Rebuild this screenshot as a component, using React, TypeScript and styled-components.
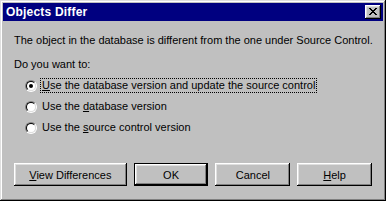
import React from "react";
import styled, { createGlobalStyle } from "styled-components";

const Global = createGlobalStyle`
  html, body { margin: 0; padding: 0; background: #c0c0c0; }
  body { font-family: "Liberation Sans", Arial, sans-serif; font-size: 11px; color: #000; }
`;

const Window = styled.div`
  width: 386px;
  height: 201px;
  box-sizing: border-box;
  padding: 3px;
  background: #c0c0c0;
  box-shadow: inset -1px -1px #000, inset 1px 1px #dfdfdf, inset -2px -2px #808080, inset 2px 2px #fff;
  display: flex;
  flex-direction: column;
`;

const TitleBar = styled.div`
  height: 18px;
  background: #000080;
  display: flex;
  align-items: center;
  justify-content: space-between;
  padding: 0 2px 0 3px;
`;

const Title = styled.span`
  color: #fff;
  font-weight: bold;
  font-size: 12px;
  letter-spacing: 0.2px;
`;

const CloseButton = styled.div`
  width: 16px;
  height: 14px;
  box-sizing: border-box;
  background: #c0c0c0;
  box-shadow: inset -1px -1px #000, inset 1px 1px #fff, inset -2px -2px #808080, inset 2px 2px #dfdfdf;
  display: flex;
  align-items: center;
  justify-content: center;
  padding-bottom: 1px;
`;

const Content = styled.div`
  flex: 1;
  display: flex;
  flex-direction: column;
  padding: 13px 11px 12px 11px;
`;

const Line = styled.div<{ $mt?: number }>`
  line-height: 13px;
  white-space: nowrap;
  margin-top: ${(p) => p.$mt ?? 0}px;
`;

const RadioGroup = styled.div`
  margin-top: 4px;
  padding-left: 11px;
  display: flex;
  flex-direction: column;
`;

const RadioRow = styled.div`
  height: 21px;
  display: flex;
  align-items: center;
`;

const RadioOuter = styled.div`
  width: 12px;
  height: 12px;
  box-sizing: border-box;
  border-radius: 50%;
  border: 1px solid;
  border-color: #808080 #fff #fff #808080;
  display: flex;
  align-items: center;
  justify-content: center;
  margin-right: 5px;
`;

const RadioInner = styled.div`
  width: 10px;
  height: 10px;
  box-sizing: border-box;
  border-radius: 50%;
  border: 1px solid;
  border-color: #000 #dfdfdf #dfdfdf #000;
  background: #fff;
  display: flex;
  align-items: center;
  justify-content: center;
`;

const Dot = styled.div`
  width: 4px;
  height: 4px;
  border-radius: 50%;
  background: #000;
`;

const Label = styled.span<{ $focus?: boolean }>`
  line-height: 13px;
  padding: 0 1px;
  border: 1px dotted ${(p) => (p.$focus ? "#000" : "transparent")};
  margin-left: -2px;
  white-space: nowrap;
`;

const U = styled.span`
  text-decoration: underline;
`;

const ButtonRow = styled.div`
  margin-top: auto;
  display: flex;
  gap: 7px;
`;

const Button = styled.div<{ $w: number; $default?: boolean }>`
  width: ${(p) => p.$w}px;
  height: 23px;
  box-sizing: border-box;
  background: #c0c0c0;
  display: flex;
  align-items: center;
  justify-content: center;
  border: 1px solid ${(p) => (p.$default ? "#000" : "transparent")};
  box-shadow: inset -1px -1px #000, inset 1px 1px #fff, inset -2px -2px #808080, inset 2px 2px #dfdfdf;
  ${(p) => (p.$default ? "" : "border: none;")}
  white-space: nowrap;
`;

const Radio = ({ checked }: { checked?: boolean }) => (
  <RadioOuter>
    <RadioInner>{checked && <Dot />}</RadioInner>
  </RadioOuter>
);

export default function App() {
  return (
    <>
      <Global />
      <Window>
        <TitleBar>
          <Title>Objects Differ</Title>
          <CloseButton>
            <svg width="8" height="7" viewBox="0 0 8 7" shapeRendering="crispEdges">
              <path
                d="M0 0h2v1h-2zM6 0h2v1h-2zM1 1h2v1h-2zM5 1h2v1h-2zM2 2h4v1h-4zM3 3h2v1h-2zM2 4h4v1h-4zM1 5h2v1h-2zM5 5h2v1h-2zM0 6h2v1h-2zM6 6h2v1h-2z"
                fill="#000"
              />
            </svg>
          </CloseButton>
        </TitleBar>
        <Content>
          <Line>The object in the database is different from the one under Source Control.</Line>
          <Line $mt={11}>Do you want to:</Line>
          <RadioGroup>
            <RadioRow>
              <Radio checked />
              <Label $focus>
                <U>U</U>se the database version and update the source control
              </Label>
            </RadioRow>
            <RadioRow>
              <Radio />
              <Label>
                Use the <U>d</U>atabase version
              </Label>
            </RadioRow>
            <RadioRow>
              <Radio />
              <Label>
                Use the <U>s</U>ource control version
              </Label>
            </RadioRow>
          </RadioGroup>
          <ButtonRow>
            <Button $w={113}>
              <span>
                <U>V</U>iew Differences
              </span>
            </Button>
            <Button $w={75} $default>
              OK
            </Button>
            <Button $w={75}>Cancel</Button>
            <Button $w={75}>
              <span>
                <U>H</U>elp
              </span>
            </Button>
          </ButtonRow>
        </Content>
      </Window>
    </>
  );
}
